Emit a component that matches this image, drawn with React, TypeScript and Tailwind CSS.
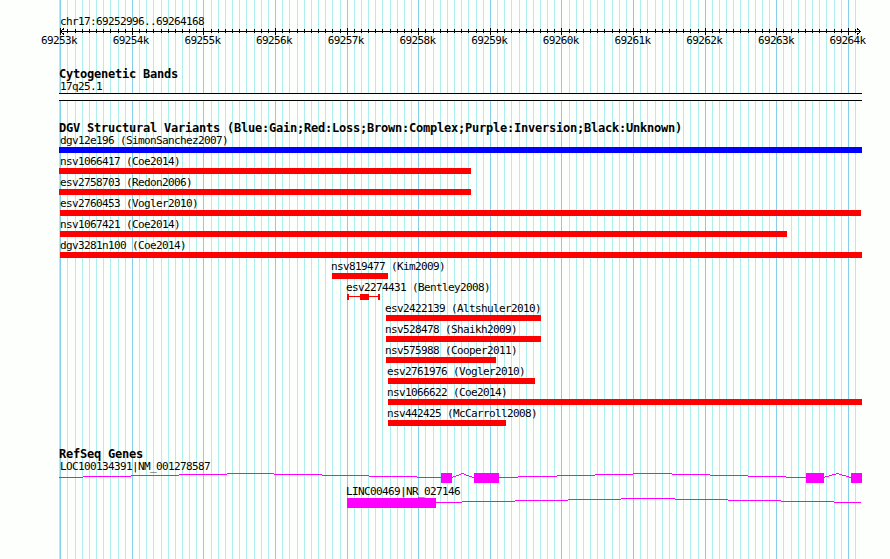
import { clsx } from 'clsx';

// One kilobase is 71.6px wide, the first one starts at 60px
const PX_PER_KB = 71.6;
const ORIGIN = 60.286;

interface Variant {
  name: string;
  study: string;
  labelX: number;
  start: number;
  end: number;
  gain?: boolean;
  range?: [number, number];
}

const variants: Variant[] = [
  { name: 'dgv12e196', study: 'SimonSanchez2007', labelX: 60, start: 59, end: 862, gain: true },
  { name: 'nsv1066417', study: 'Coe2014', labelX: 60, start: 59, end: 471 },
  { name: 'esv2758703', study: 'Redon2006', labelX: 60, start: 59, end: 471 },
  { name: 'esv2760453', study: 'Vogler2010', labelX: 60, start: 60, end: 861 },
  { name: 'nsv1067421', study: 'Coe2014', labelX: 60, start: 60, end: 787 },
  { name: 'dgv3281n100', study: 'Coe2014', labelX: 60, start: 60, end: 862 },
  { name: 'nsv819477', study: 'Kim2009', labelX: 331, start: 332, end: 388 },
  { name: 'esv2274431', study: 'Bentley2008', labelX: 346, start: 360, end: 369, range: [347, 380] },
  { name: 'esv2422139', study: 'Altshuler2010', labelX: 385, start: 386, end: 541 },
  { name: 'nsv528478', study: 'Shaikh2009', labelX: 385, start: 386, end: 541 },
  { name: 'nsv575988', study: 'Cooper2011', labelX: 385, start: 386, end: 496 },
  { name: 'esv2761976', study: 'Vogler2010', labelX: 387, start: 388, end: 535 },
  { name: 'nsv1066622', study: 'Coe2014', labelX: 387, start: 388, end: 862 },
  { name: 'nsv442425', study: 'McCarroll2008', labelX: 387, start: 388, end: 506 },
];

const ticks = Array.from({ length: 112 }, (_, i) => ({
  x: Math.round(ORIGIN + (i * PX_PER_KB) / 10),
  major: i % 10 === 0,
}));

const kilobases = Array.from({ length: 12 }, (_, i) => 69253 + i);

function GridLines() {
  return (
    <svg className="absolute inset-0 -z-10" width="890" height="559" shapeRendering="crispEdges">
      <rect x="59" y="0" width="1" height="559" fill="#afeeee" />
      {ticks.map((tick) => (
        <rect key={tick.x} x={tick.x} y="0" width="1" height="559" fill={tick.major ? '#87ceeb' : '#afeeee'} />
      ))}
    </svg>
  );
}

function Ruler() {
  return (
    <header className="h-[68px] pt-4">
      <p className="ml-[60px] h-[11px]">chr17:69252996..69264168</p>
      <svg className="block" width="890" height="8" shapeRendering="crispEdges">
        <path d="M60 4.5H861" stroke="black" />
        {ticks.map((tick) => (
          <rect key={tick.x} x={tick.x} y={tick.major ? 1 : 2} width="1" height={tick.major ? 7 : 4} />
        ))}
        <path d="M64 1.5L60.5 4.5L64 7.5M857 1.5L860.5 4.5L857 7.5" fill="none" stroke="black" />
      </svg>
      <div className="ml-[41px] flex">
        {kilobases.map((kb) => (
          <span key={kb} className="w-[71.7px] shrink-0">
            {kb}k
          </span>
        ))}
      </div>
    </header>
  );
}

function TrackTitle({ children }: { children: string }) {
  return <h2 className="ml-[59px] h-3 text-[12px] leading-3 font-bold tracking-[-0.224px]">{children}</h2>;
}

function VariantRow({ variant }: { variant: Variant }) {
  const { name, study, labelX, start, end, gain, range } = variant;

  return (
    <li className="h-[21px]">
      <p className="h-3" style={{ marginLeft: labelX }}>
        {name} ({study})
      </p>
      {range ? (
        <div
          className="flex h-1.5 border-x-2 border-[#ff0000]"
          style={{ marginLeft: range[0], width: range[1] - range[0] }}
        >
          <span className="mt-0.5 h-px bg-[#ff0000]" style={{ width: start - range[0] - 2 }} />
          <span className="h-1.5 bg-[#ff0000]" style={{ width: end - start }} />
          <span className="mt-0.5 h-px flex-1 bg-[#ff0000]" />
        </div>
      ) : (
        <div
          className={clsx('h-1.5', gain ? 'bg-[#0000ff]' : 'bg-[#ff0000]')}
          style={{ marginLeft: start, width: end - start }}
        />
      )}
    </li>
  );
}

export default function App() {
  return (
    <main className="relative isolate h-[559px] w-[890px] overflow-hidden bg-[#fdfffd] font-['DejaVu_Sans_Mono',monospace] text-[11px] leading-3 tracking-[-0.622px] whitespace-pre text-black">
      <GridLines />
      <Ruler />

      <section className="h-[54px]">
        <TrackTitle>Cytogenetic Bands</TrackTitle>
        <p className="ml-[60px] h-[13px] pt-px">17q25.1</p>
        <div className="ml-[59px] h-2 w-[803px] border-y border-black bg-[#fdfffd]" />
      </section>

      <section className="h-[326px]">
        <TrackTitle>DGV Structural Variants (Blue:Gain;Red:Loss;Brown:Complex;Purple:Inversion;Black:Unknown)</TrackTitle>
        <ul className="pt-px">
          {variants.map((variant) => (
            <VariantRow key={variant.name} variant={variant} />
          ))}
        </ul>
      </section>

      <section>
        <TrackTitle>RefSeq Genes</TrackTitle>
        <p className="ml-[60px] h-3 pt-px">LOC100134391|NM_001278587</p>
        <svg className="block" width="890" height="13" shapeRendering="crispEdges">
          <g fill="none" stroke="#ff00ff">
            <path d="M59 5.5H83M83 4.5H131M131 3.5H179M179 2.5H227M227 1.5H274M274 2.5H322M322 3.5H369M369 4.5H417M417 5.5H441" />
            <path d="M452 5.5H453M453 4.5H456M456 3.5H459M459 2.5H461M461 1.5H464M464 2.5H466M466 3.5H469M469 4.5H472M472 5.5H474" />
            <path d="M499 5.5H518M518 4.5H557M557 3.5H595M595 2.5H633M633 1.5H672M672 2.5H710M710 3.5H748M748 4.5H786M786 5.5H806" />
            <path d="M824 5.5H825M825 4.5H829M829 3.5H832M832 2.5H836M836 1.5H839M839 2.5H842M842 3.5H846M846 4.5H849M849 5.5H851" />
          </g>
          <g fill="#ff00ff">
            <rect x="441" y="1" width="11" height="10" />
            <rect x="474" y="1" width="25" height="10" />
            <rect x="806" y="1" width="18" height="10" />
            <rect x="851" y="1" width="11" height="10" />
          </g>
        </svg>
        <p className="ml-[346px] h-3 pt-px">LINC00469|NR_027146</p>
        <svg className="block" width="890" height="13" shapeRendering="crispEdges">
          <path
            d="M436 5.5H462M462 4.5H515M515 3.5H568M568 2.5H621M621 1.5H675M675 2.5H728M728 3.5H781M781 4.5H834M834 5.5H861"
            fill="none"
            stroke="#ff00ff"
          />
          <rect x="347" y="1" width="89" height="10" fill="#ff00ff" />
        </svg>
      </section>
    </main>
  );
}
